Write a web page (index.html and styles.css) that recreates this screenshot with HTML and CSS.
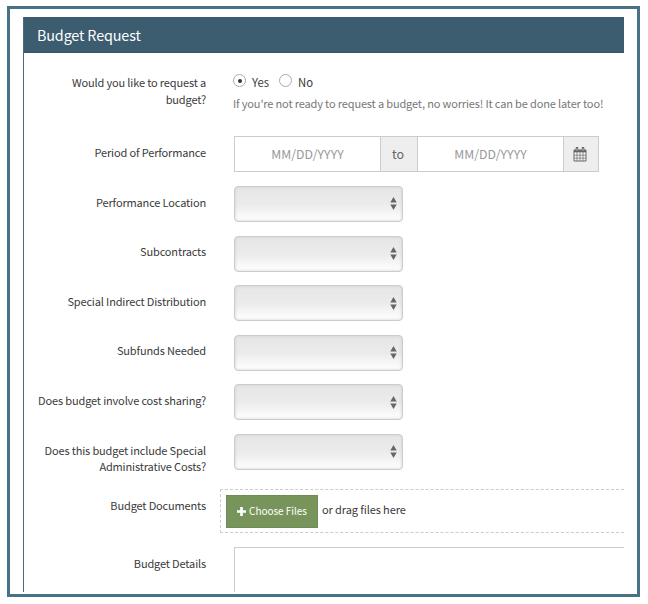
FILE: index.html
```html
<!DOCTYPE html>
<html lang="en">
<head>
<meta charset="utf-8">
<title>Budget Request</title>
<link rel="stylesheet" href="styles.css">
</head>
<body>
<div class="frame">
<section class="panel">
  <h1 class="panel-title"><span>Budget Request</span></h1>
  <form class="form">
    <div class="row row-request">
      <div class="label">Would you like to request a<br>budget?</div>
      <div class="field">
        <div class="radios">
          <span class="radio checked"></span><span class="yes">Yes</span>
          <span class="radio"></span><span>No</span>
        </div>
        <p class="help">If you're not ready to request a budget, no worries! It can be done later too!</p>
      </div>
    </div>
    <div class="row">
      <div class="label period">Period of Performance</div>
      <div class="field dates">
        <div class="date">MM/DD/YYYY</div>
        <div class="addon to">to</div>
        <div class="date">MM/DD/YYYY</div>
        <div class="addon cal">
          <svg width="14" height="15" viewBox="0 0 14 15"><path d="M1 3h12v11H1z" fill="#f7f7f7" stroke="#666"/><path d="M1 3h12v2.3H1z" fill="#666"/><path d="M4 5v9M7 5v9M10 5v9M1 8.2h12M1 11.1h12" stroke="#777" stroke-width=".8"/><path d="M4 1v3M10 1v3" stroke="#666" stroke-width="2.6" stroke-linecap="round"/><path d="M4 1.3v2.4M10 1.3v2.4" stroke="#ddd" stroke-width=".8"/></svg>
        </div>
      </div>
    </div>
    <div class="row">
      <div class="label">Performance Location</div>
      <div class="field select"><svg width="7" height="13" viewBox="0 0 7 13"><path d="M3.5 0 6.7 5.5H.3zM.3 7.5h6.4L3.5 13z"/></svg></div>
    </div>
    <div class="row">
      <div class="label">Subcontracts</div>
      <div class="field select"><svg width="7" height="13" viewBox="0 0 7 13"><path d="M3.5 0 6.7 5.5H.3zM.3 7.5h6.4L3.5 13z"/></svg></div>
    </div>
    <div class="row">
      <div class="label">Special Indirect Distribution</div>
      <div class="field select"><svg width="7" height="13" viewBox="0 0 7 13"><path d="M3.5 0 6.7 5.5H.3zM.3 7.5h6.4L3.5 13z"/></svg></div>
    </div>
    <div class="row">
      <div class="label">Subfunds Needed</div>
      <div class="field select"><svg width="7" height="13" viewBox="0 0 7 13"><path d="M3.5 0 6.7 5.5H.3zM.3 7.5h6.4L3.5 13z"/></svg></div>
    </div>
    <div class="row">
      <div class="label">Does budget involve cost sharing?</div>
      <div class="field select"><svg width="7" height="13" viewBox="0 0 7 13"><path d="M3.5 0 6.7 5.5H.3zM.3 7.5h6.4L3.5 13z"/></svg></div>
    </div>
    <div class="row row-admin">
      <div class="label">Does this budget include Special<br>Administrative Costs?</div>
      <div class="field select"><svg width="7" height="13" viewBox="0 0 7 13"><path d="M3.5 0 6.7 5.5H.3zM.3 7.5h6.4L3.5 13z"/></svg></div>
    </div>
    <div class="row row-docs">
      <div class="label">Budget Documents</div>
      <div class="drop">
        <div class="choose"><svg width="9" height="9" viewBox="0 0 9 9"><path d="M4.5 0v9M0 4.5h9" stroke="#fff" stroke-width="2.6"/></svg><span>Choose Files</span></div>
        <span class="drag">or drag files here</span>
      </div>
    </div>
    <div class="row row-details">
      <div class="label">Budget Details</div>
      <div class="details"></div>
    </div>
  </form>
</section>
</div>
</body>
</html>
```
FILE: styles.css
```css
* { box-sizing: border-box; }
body {
  margin: 0;
  height: 604px;
  padding: 6px 8px 7px 7px;
  overflow: hidden;
  background: #fff;
  color: #3a3a3a;
  font: 12px/16.5px "Noto Sans CJK SC", "Open Sans", sans-serif;
}
.frame {
  height: 591px;
  padding: 8px 13px 2px;
  border: 3px solid #4a7286;
}
.panel { height: 575px; overflow: hidden; border-left: 1px solid #50697a; }
.panel-title {
  margin: 0 0 0 -1px;
  height: 36px;
  padding-left: 14px;
  background: #3c5c6f;
  border-bottom: 1px solid #345468;
  color: #fff;
  font-size: 14.4px;
  font-weight: 400;
  letter-spacing: -.16px;
  line-height: 35px;
}
.form { padding-top: 13.9px; }
.row { display: flex; height: 49.6px; }
.row-request { height: 69.5px; }
.row-admin { height: 55px; }
.row-docs { height: 58px; }
.row-details { height: 60px; }
.label {
  width: 182px;
  flex: none;
  padding-top: 7.6px;
  text-align: right;
  font-size: 11px;
  letter-spacing: -.15px;
  white-space: nowrap;
}
.field { margin-left: 28px; }
.radios { display: flex; align-items: center; height: 17px; margin-top: 6.6px; font-size: 11.3px; }
.radio {
  display: flex;
  width: 13px;
  height: 13px;
  margin: -2px 6px 0 -1px;
  border: 1px solid #aaa;
  border-radius: 50%;
  align-items: center;
  justify-content: center;
}
.checked::after { content: ""; width: 4px; height: 4px; border-radius: 50%; background: #333; }
.yes { width: 28px; }
.help { margin: 4.5px 0 0 -1px; color: #777; font-size: 11px; letter-spacing: -.15px; white-space: nowrap; }
.dates { display: flex; width: 365px; height: 36px; border: 1px solid #ccc; }
.date { width: 145px; text-align: center; line-height: 34px; color: #999; font-size: 12.3px; }
.addon {
  display: flex;
  align-items: center;
  justify-content: center;
  background: #eee;
  border-left: 1px solid #ccc;
  color: #666;
}
.to { width: 38px; padding-right: 2px; border-right: 1px solid #ccc; font-size: 12.5px; }
.cal { flex: 1; padding-right: 2px; }
.select {
  display: flex;
  width: 169px;
  height: 36px;
  padding-right: 5px;
  align-items: center;
  justify-content: flex-end;
  border: 1px solid #ccc;
  border-radius: 4px;
  background: linear-gradient(#e6e6e6, #ebebeb 50%, #fff);
  box-shadow: inset 0 0 3px #ccc;
  fill: #666;
}
.drop {
  display: flex;
  flex: 1;
  height: 44px;
  margin-left: 14px;
  padding: 5px;
  border: 1px dashed #ccc;
  border-right: 0;
}
.choose {
  display: flex;
  width: 92px;
  height: 33px;
  align-items: center;
  justify-content: center;
  gap: 3px;
  background: #77955b;
  border: 1px solid #708c55;
  color: #fff;
  font-size: 10px;
  letter-spacing: -.05px;
  white-space: nowrap;
}
.drag { margin-left: 4px; line-height: 29px; font-size: 11px; letter-spacing: -.1px; }
.details { flex: 1; height: 80px; margin-left: 28px; border: 1px solid #ccc; border-right: 0; }
```
